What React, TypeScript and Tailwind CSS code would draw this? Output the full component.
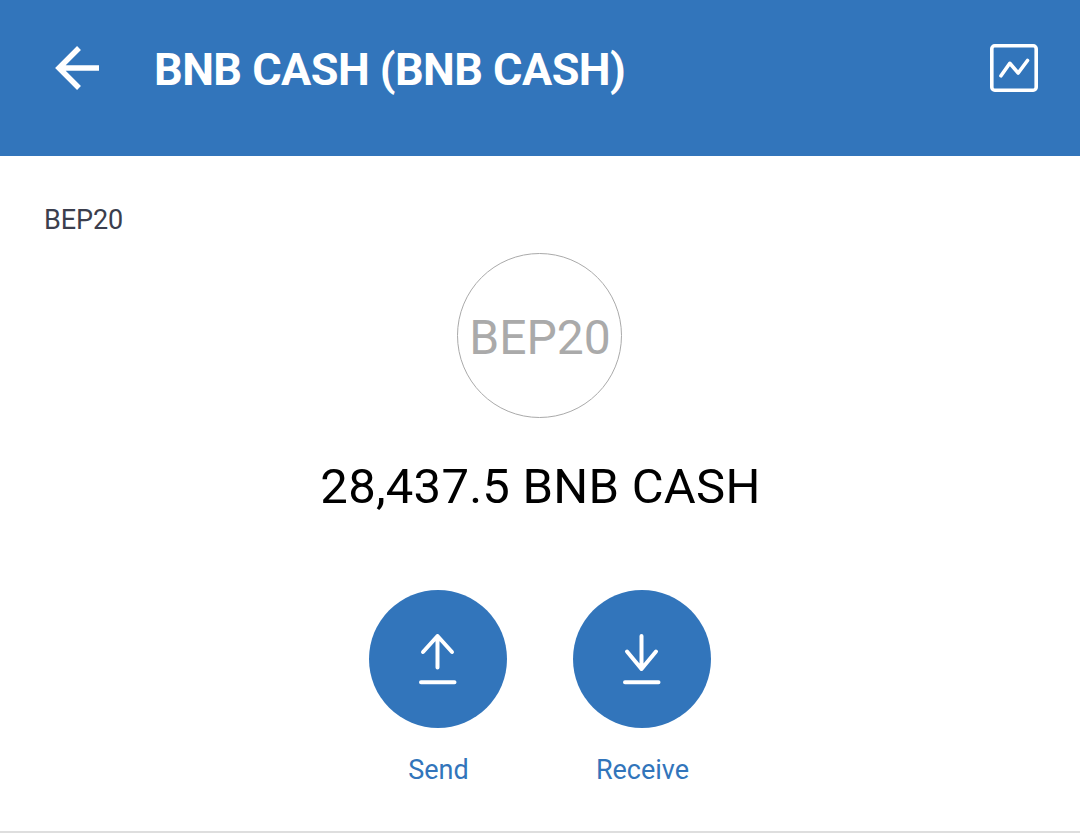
import React from 'react';

function ActionButton({ label, children }: { label: string; children: React.ReactNode }) {
  return (
    <div className="flex w-[138px] flex-col items-center">
      <button aria-label={label} className="h-[138px] w-[138px] rounded-full bg-[#3275bb]">
        <svg
          viewBox="0 0 138 138"
          className="h-full w-full"
          fill="none"
          stroke="white"
          strokeWidth="4"
          strokeLinecap="round"
          strokeLinejoin="round"
        >
          {children}
        </svg>
      </button>
      <span className="mt-[24px] pl-px text-[27px] leading-[36px] text-[#3275bb]">{label}</span>
    </div>
  );
}

export default function App() {
  return (
    <div className="flex h-[837px] w-[1080px] flex-col overflow-hidden bg-white font-['Roboto',sans-serif]">
      <header className="flex h-[156px] items-start bg-[#3275bb] pt-[36px] text-white">
        <svg viewBox="0 0 64 64" className="ml-[45px] h-16 w-16" fill="none" stroke="white" strokeWidth="5.5">
          <path d="M54 32H14M34 12L14 32L34 52" />
        </svg>
        <h1 className="mt-px ml-[45px] text-[45px] leading-[66px] font-bold tracking-[-0.55px] whitespace-nowrap">
          BNB CASH (BNB CASH)
        </h1>
        <svg
          viewBox="0 0 64 64"
          className="mr-[35px] ml-auto h-16 w-16"
          fill="none"
          stroke="white"
          strokeWidth="3.6"
          strokeLinecap="round"
          strokeLinejoin="round"
        >
          <rect x="10.800" y="9.800" width="44.400" height="44.400" rx="3" />
          <path d="M20 39.800L28.800 27.300L37.200 37L46.500 24.500" />
        </svg>
      </header>
      <main className="flex flex-1 flex-col items-center">
        <div className="mt-[44px] h-[53px] self-start pl-[44px] text-[27px] leading-[40px] tracking-[-0.1px] text-[#3b3e4d]">BEP20</div>
        <div className="mr-px flex h-[165px] w-[165px] items-center justify-center rounded-full border border-[#aaaaaa] pt-[5px] pl-px text-[48px] text-[#aaaaaa]">
          BEP20
        </div>
        <div className="mt-[37px] pl-px text-[49px] leading-[64px] tracking-[0.25px] whitespace-nowrap text-black">28,437.5 BNB CASH</div>
        <div className="mt-[71px] flex gap-[66px]">
          <ActionButton label="Send">
            <path d="M68.500 77.500V46M54 62L68.500 46L83 62M52 92.300H85.500" />
          </ActionButton>
          <ActionButton label="Receive">
            <path d="M68.500 46V79M54 61.500L68.500 79L83 61.500M52 92.300H85.500" />
          </ActionButton>
        </div>
        <div className="mt-auto mb-[4px] h-[2px] w-full bg-[#dedede]" />
      </main>
    </div>
  );
}
